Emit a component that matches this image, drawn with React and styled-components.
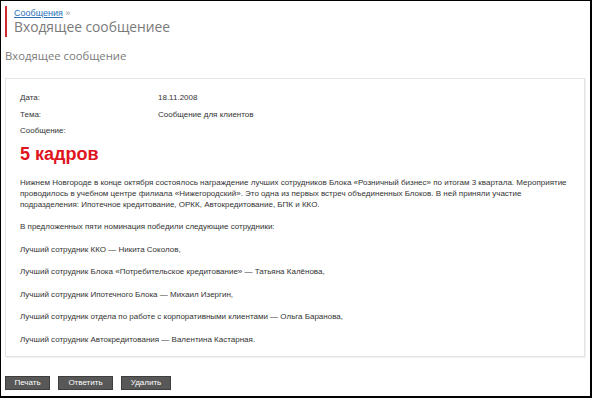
import React from 'react'
import styled, {createGlobalStyle} from 'styled-components'

const Global = createGlobalStyle`
  html, body { margin: 0; padding: 0; background: #fff; }
`;

const Page = styled.div`
  box-sizing: border-box;
  width: 592px;
  height: 398px;
  border-top: 1px solid #000;
  border-left: 1px solid #000;
  border-right: 2px solid #000;
  border-bottom: 2px solid #000;
  padding: 5px 5px 0 4px;
  font-family: "Liberation Sans", Arial, sans-serif;
  overflow: hidden;
`;

const Header = styled.div`
  border-left: 2px solid #d0282e;
  padding: 2px 0 2px 7px;
  height: 27px;
`;

const Crumbs = styled.div`
  font-size: 9px;
  line-height: 10px;
  color: #999;
  a { color: #2a6fb8; text-decoration: underline; }
`;

const Title = styled.h1`
  margin: 0;
  font-family: "Open Sans", sans-serif;
  font-weight: 400;
  font-size: 13.8px;
  line-height: 18px;
  color: #7a7a7a;
`;

const SubTitle = styled.h2`
  margin: 12px 0 0;
  font-family: "Open Sans", sans-serif;
  font-weight: 400;
  font-size: 11.3px;
  line-height: 14px;
  color: #7a7a7a;
`;

const Panel = styled.div`
  margin-top: 15px;
  width: 580px;
  height: 279px;
  box-sizing: border-box;
  border: 1px solid #e4e4e4;
  box-shadow: 1px 1px 0 #f0f0f0;
  padding: 13px 14px 0;
  font-size: 8px;
  color: #333;
`;

const Field = styled.div`
  display: grid;
  grid-template-columns: 138px 1fr;
  height: 16.5px;
  line-height: 12px;
`;

const Headline = styled.div`
  color: #e0141e;
  font-weight: bold;
  font-size: 18px;
  line-height: 20px;
  margin: 2px 0 13px;
`;

const Para = styled.p`
  margin: 0 0 11.5px;
  line-height: 11px;
`;

const Buttons = styled.div`
  display: flex;
  gap: 8px;
  margin-top: 19px;
`;

const Button = styled.button`
  width: ${p => p.w}px;
  height: 14px;
  padding: 0;
  border: 1px solid #3e3e3e;
  background: #585858;
  color: #fff;
  font-family: "Liberation Sans", Arial, sans-serif;
  font-size: 8px;
  line-height: 12px;
`;

const winners = [
  'Лучший сотрудник ККО — Никита Соколов,',
  'Лучший сотрудник Блока «Потребительское кредитование» — Татьяна Калёнова,',
  'Лучший сотрудник Ипотечного Блока — Михаил Изергин,',
  'Лучший сотрудник отдела по работе с корпоративными клиентами — Ольга Баранова,',
  'Лучший сотрудник Автокредитования — Валентина Кастарная.',
];

export default function App() {
  return (
    <Page>
      <Global />
      <Header>
        <Crumbs><a href="#">Сообщения</a> »</Crumbs>
        <Title>Входящее сообщениее</Title>
      </Header>
      <SubTitle>Входящее сообщение</SubTitle>
      <Panel>
        <Field><span>Дата:</span><span>18.11.2008</span></Field>
        <Field><span>Тема:</span><span>Сообщение для клиентов</span></Field>
        <Field><span>Сообщение:</span><span></span></Field>
        <Headline>5 кадров</Headline>
        <Para>
          Нижнем Новгороде в конце октября состоялось награждение лучших сотрудников Блока «Розничный бизнес» по итогам 3 квартала. Мероприятие
          <br />проводилось в учебном центре филиала «Нижегородский». Это одна из первых встреч объединенных Блоков. В ней приняли участие
          <br />подразделения: Ипотечное кредитование, ОРКК, Автокредитование, БПК и ККО.
        </Para>
        <Para>В предложенных пяти номинация победили следующие сотрудники:</Para>
        {winners.map(w => <Para key={w}>{w}</Para>)}
      </Panel>
      <Buttons>
        <Button w={45}>Печать</Button>
        <Button w={55}>Ответить</Button>
        <Button w={50}>Удалить</Button>
      </Buttons>
    </Page>
  )
}
